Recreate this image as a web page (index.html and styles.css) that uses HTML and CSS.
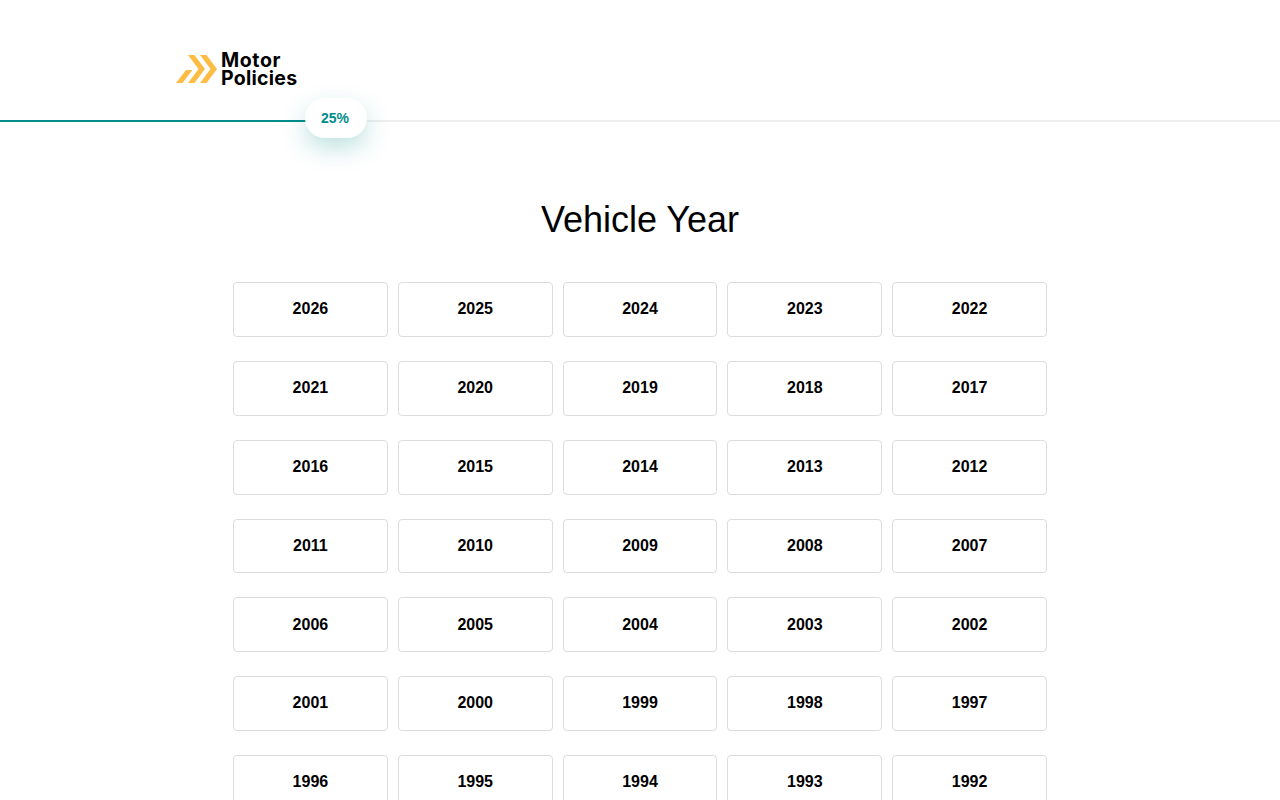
FILE: index.html
```html
<!DOCTYPE html>
<html lang="en">
<head>
<meta charset="utf-8">
<title>Vehicle Year</title>
<link rel="stylesheet" href="styles.css">
</head>
<body>
<header class="header">
  <a class="logo" href="#">
    <svg class="logo-mark" width="42" height="30" viewBox="0 0 42 30" aria-hidden="true">
      <path fill="#fdbd45" d="M24 1h6.500L41 15 30.500 29H24l10.500-14z"/>
      <path fill="#fdbd45" d="M12 1h6.500L29 15 18.500 29H12l10.500-14z"/>
      <path fill="#fdbd45" d="M0 29l10-13h6.500L6.500 29z"/>
    </svg>
    <span class="logo-text"><span class="logo-line logo-line-wide">Motor</span><span class="logo-line">Policies</span></span>
  </a>
</header>
<div class="progress">
  <div class="progress-fill"></div>
  <div class="progress-badge">25%</div>
</div>
<main class="main">
  <h1 class="title">Vehicle Year</h1>
  <div class="year-grid">
    <button class="year">2026</button><button class="year">2025</button><button class="year">2024</button><button class="year">2023</button><button class="year">2022</button>
    <button class="year">2021</button><button class="year">2020</button><button class="year">2019</button><button class="year">2018</button><button class="year">2017</button>
    <button class="year">2016</button><button class="year">2015</button><button class="year">2014</button><button class="year">2013</button><button class="year">2012</button>
    <button class="year">2011</button><button class="year">2010</button><button class="year">2009</button><button class="year">2008</button><button class="year">2007</button>
    <button class="year">2006</button><button class="year">2005</button><button class="year">2004</button><button class="year">2003</button><button class="year">2002</button>
    <button class="year">2001</button><button class="year">2000</button><button class="year">1999</button><button class="year">1998</button><button class="year">1997</button>
    <button class="year">1996</button><button class="year">1995</button><button class="year">1994</button><button class="year">1993</button><button class="year">1992</button>
  </div>
</main>
</body>
</html>
```
FILE: styles.css
```css
* { box-sizing: border-box; }
html, body { margin: 0; height: 800px; overflow: hidden; background: #fff; }
body { font-family: "Liberation Sans", Arial, sans-serif; color: #000; }
.header { height: 120px; padding: 51px 0 0 176px; }
.logo { display: flex; align-items: center; gap: 3px; color: #000; text-decoration: none; }
.logo-mark { display: block; }
.logo-text { font-family: Inter, sans-serif; font-weight: 700; font-size: 19.500px; letter-spacing: .25px; }
.logo-line { display: block; height: 18px; line-height: 18px; }
.logo-line-wide { letter-spacing: .6px; }
.progress { position: relative; height: 2px; background: #eee; }
.progress-fill { width: 25%; height: 100%; background: #008c8c; }
.progress-badge {
  position: absolute; left: 305px; top: -22px; width: 62px; height: 40px; padding: 0 2px 0 0;
  display: flex; align-items: center; justify-content: center;
  background: #fff; border-radius: 20px; color: #008c8c;
  font-weight: 700; font-size: 14px;
  box-shadow: 0 10px 25px rgba(0, 140, 140, .25);
}
.main { padding-top: 74px; }
.title { margin: 0 0 38.200px; font-weight: 400; font-size: 36px; line-height: 48px; text-align: center; }
.year-grid {
  width: 814px; margin: 0 auto;
  display: grid; grid-template-columns: repeat(5, 1fr); column-gap: 10px; row-gap: 24px;
}
.year {
  height: 54.800px; padding: 0 0 .4px; background: #fff;
  border: 1px solid #dcdcdc; border-radius: 4px;
  font-family: inherit; font-weight: 700; font-size: 16px; color: #000;
}
```
